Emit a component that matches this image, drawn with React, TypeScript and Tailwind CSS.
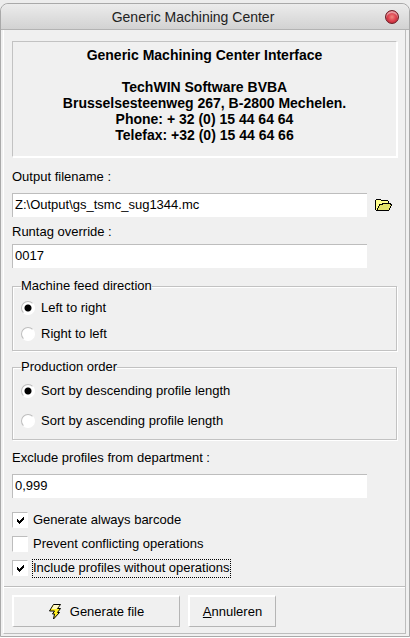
import { useState } from "react";
import type { ReactNode } from "react";

type FieldProps = {
  id: string;
  label: string;
  value: string;
  compact?: boolean;
  onChange: (value: string) => void;
  action?: ReactNode;
};

const TextField = ({ id, label, value, compact, onChange, action }: FieldProps) => {
  return (
    <div>
      <label htmlFor={id} className="block h-4 text-[13px] leading-4">
        {label}
      </label>
      <div className={compact ? "mt-1 flex items-center gap-2" : "mt-2 flex items-center gap-2"}>
        <input
          id={id}
          type="text"
          value={value}
          onChange={(e) => onChange(e.target.value)}
          className="h-6 min-w-0 flex-1 border-t border-l border-[#bdbdbd] bg-white px-0.5 pb-0.5 text-[13px] leading-4 outline-none"
        />
        <div className="flex w-[22px] shrink-0">{action}</div>
      </div>
    </div>
  );
};

type RadioProps = {
  name: string;
  label: string;
  checked: boolean;
  onChange: () => void;
};

const Radio = ({ name, label, checked, onChange }: RadioProps) => {
  return (
    <label className="flex h-4 items-center gap-1.5 text-[13px] leading-4">
      <input
        type="radio"
        name={name}
        checked={checked}
        onChange={onChange}
        className="size-3.5 appearance-none rounded-full border border-white border-t-[#bdbdbd] border-l-[#bdbdbd] bg-white checked:bg-[radial-gradient(circle,#000_3px,#fff_4px)]"
      />
      {label}
    </label>
  );
};

type CheckProps = {
  label: string;
  checked: boolean;
  focused?: boolean;
  onChange: () => void;
};

const Check = ({ label, checked, focused, onChange }: CheckProps) => {
  return (
    <label className="flex h-5 items-center gap-1 text-[13px] leading-4">
      <span className="grid size-4 place-items-center">
        <input
          type="checkbox"
          checked={checked}
          onChange={onChange}
          className="col-start-1 row-start-1 size-4 appearance-none border border-white border-t-[#bdbdbd] border-l-[#bdbdbd] bg-white"
        />
        {checked && (
          <svg
            viewBox="0 0 7 7"
            className="pointer-events-none col-start-1 row-start-1 size-[7px]"
            shapeRendering="crispEdges"
            aria-hidden="true"
          >
            <path d="M0 2h1v1h1v1h1v-1h1v-1h1v-1h1v-1h1v3h-1v1h-1v1h-1v1h-1v1h-1v-1h-1v-1h-1z" />
          </svg>
        )}
      </span>
      <span
        className={
          focused
            ? "h-[19px] border border-dotted border-black"
            : "h-[19px] border border-transparent"
        }
      >
        {label}
      </span>
    </label>
  );
};

const FolderIcon = () => (
  <svg viewBox="0 0 18 13" className="h-[13px] w-[18px]" shapeRendering="crispEdges" aria-hidden="true">
    <path fill="#000" d="M1 0h5v1h7v1h1v2h2v1h1v2h-1v2h-1v2h-1v1h-13v-1h-1v-10h1z" />
    <path fill="#ffff8c" d="M1 1h5v1h7v2h-6v1h-3v2h-1v2h-1v2h-1z" />
    <path fill="#e2e268" d="M8 5h7v1h1v1h-1v2h-1v2h-12v0h1v-2h1v-2h1v-1h3z" />
  </svg>
);

const BoltIcon = () => (
  <svg viewBox="0 0 13 17" className="h-[17px] w-[13px]" aria-hidden="true">
    <path fill="#ffee22" stroke="#000" d="M4.500 1.500h7l-3 4h3l-3 4h2l-6 6.500 1-5h-2l2-3h-5z" />
    <path fill="#fff8c8" d="M5 2h5.500l-3 4h-5z" />
  </svg>
);

const App = () => {
  const [output, setOutput] = useState("Z:\\Output\\gs_tsmc_sug1344.mc");
  const [runtag, setRuntag] = useState("0017");
  const [exclude, setExclude] = useState("0,999");
  const [feed, setFeed] = useState("ltr");
  const [order, setOrder] = useState("desc");
  const [barcode, setBarcode] = useState(true);
  const [conflicts, setConflicts] = useState(false);
  const [noOperations, setNoOperations] = useState(true);

  const groupClass =
    "border border-[#c2c2c2] pl-2 shadow-[1px_1px_0_#fff,inset_1px_1px_0_#fff]";
  const buttonClass =
    "flex h-8 items-center justify-center border-t-2 border-r border-b border-l-2 border-t-white border-r-[#b5b5b5] border-b-[#b5b5b5] border-l-white text-[13px]";

  return (
    <div className="bg-[#ededed] pt-[3px] font-['Liberation_Sans',Arial,sans-serif] text-black">
      <main className="rounded-t-lg border border-[#a9a9a9] bg-[#f0f0f0]">
        <header className="flex h-[26px] items-center rounded-t-lg border-b border-[#b3b3b3] bg-linear-to-b from-[#ececec] to-[#d2d2d2] pr-2.5">
          <h1 className="flex-1 text-center text-sm text-[#222]">Generic Machining Center</h1>
          <button
            type="button"
            aria-label="Close"
            className="size-3.5 rounded-full border border-[#6b1c24] bg-[radial-gradient(ellipse_at_50%_50%,#f08a80_0%,#de4350_45%,#a51724_100%)] shadow-[inset_0_2px_1px_#e9a3a8]"
          />
        </header>

        <div className="mr-[3px] mb-0.5 ml-0.5 border-x border-b border-r-[#bdbdbd] border-b-[#bdbdbd] border-l-white">
          <div className="px-2 pt-[11px]">
            <section className="border border-t-[#c2c2c2] border-r-white border-b-white border-l-[#c2c2c2] pt-[5px] pb-[13px] text-center text-sm leading-4 font-bold shadow-[1px_1px_0_#fff]">
              <h2>Generic Machining Center Interface</h2>
              <p className="mt-4">TechWIN Software BVBA</p>
              <p>Brusselsesteenweg 267, B-2800 Mechelen.</p>
              <p>Phone: + 32 (0) 15 44 64 64</p>
              <p>Telefax: +32 (0) 15 44 64 66</p>
            </section>

            <div className="mt-3 flex flex-col gap-[7px]">
              <TextField
                id="output"
                label="Output filename :"
                value={output}
                onChange={setOutput}
                action={
                  <button type="button" aria-label="Browse">
                    <FolderIcon />
                  </button>
                }
              />
              <TextField id="runtag" label="Runtag override :" value={runtag} compact onChange={setRuntag} />
            </div>

            <fieldset className={`mt-2.5 pb-2 ${groupClass}`}>
              <legend className="h-4 text-[13px] leading-4">Machine feed direction</legend>
              <div className="mt-1.5 flex flex-col gap-2.5">
                <Radio name="feed" label="Left to right" checked={feed === "ltr"} onChange={() => setFeed("ltr")} />
                <Radio name="feed" label="Right to left" checked={feed === "rtl"} onChange={() => setFeed("rtl")} />
              </div>
            </fieldset>

            <fieldset className={`mt-2 pb-2.5 ${groupClass}`}>
              <legend className="h-4 text-[13px] leading-4">Production order</legend>
              <div className="mt-2 flex flex-col gap-3.5">
                <Radio
                  name="order"
                  label="Sort by descending profile length"
                  checked={order === "desc"}
                  onChange={() => setOrder("desc")}
                />
                <Radio
                  name="order"
                  label="Sort by ascending profile length"
                  checked={order === "asc"}
                  onChange={() => setOrder("asc")}
                />
              </div>
            </fieldset>

            <div className="mt-2.5">
              <TextField
                id="exclude"
                label="Exclude profiles from department :"
                value={exclude}
                onChange={setExclude}
              />
            </div>

            <div className="mt-3 flex flex-col items-start gap-1">
              <Check label="Generate always barcode" checked={barcode} onChange={() => setBarcode(!barcode)} />
              <Check
                label="Prevent conflicting operations"
                checked={conflicts}
                onChange={() => setConflicts(!conflicts)}
              />
              <Check
                label="Include profiles without operations"
                checked={noOperations}
                focused
                onChange={() => setNoOperations(!noOperations)}
              />
            </div>
          </div>

          <footer className="mt-2 flex gap-2 border-t border-[#bdbdbd] px-2 pt-2 pb-1.5 shadow-[inset_0_1px_0_#fff]">
            <button type="button" className={`w-42 gap-2 ${buttonClass}`}>
              <BoltIcon />
              Generate file
            </button>
            <button type="button" className={`w-22 ${buttonClass}`}>
              <span>
                <span className="underline">A</span>nnuleren
              </span>
            </button>
          </footer>
        </div>
      </main>
    </div>
  );
};

export default App;
